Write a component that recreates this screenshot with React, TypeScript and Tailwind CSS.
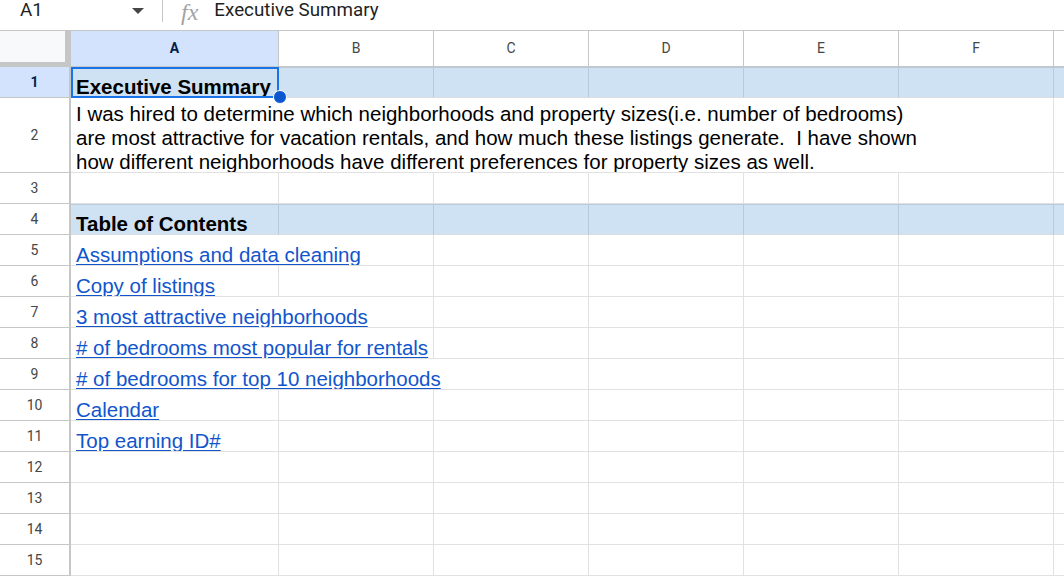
import React from "react";

type Cell = { span: number; content?: React.ReactNode };
type Row = { n: number; tall?: boolean; blue?: boolean; selected?: boolean; cell?: Cell };

const spanWidth: Record<number, string> = {
  1: "w-[208px]",
  2: "w-[363px]",
  3: "w-[518px]",
  6: "w-[983px]",
};

const cols = ["A", "B", "C", "D", "E", "F", "G"];

const Link = ({ children }: { children: React.ReactNode }) => (
  <span className="text-[#1155cc] underline underline-offset-[2px] decoration-[1.5px]">{children}</span>
);

const rows: Row[] = [
  { n: 1, blue: true, selected: true, cell: { span: 1, content: <b>Executive Summary</b> } },
  {
    n: 2,
    tall: true,
    cell: {
      span: 6,
      content: (
        <div className="whitespace-pre">
          <div>I was hired to determine which neighborhoods and property sizes(i.e. number of bedrooms)</div>
          <div>are most attractive for vacation rentals, and how much these listings generate.  I have shown</div>
          <div>how different neighborhoods have different preferences for property sizes as well.</div>
        </div>
      ),
    },
  },
  { n: 3 },
  { n: 4, blue: true, cell: { span: 1, content: <b>Table of Contents</b> } },
  { n: 5, cell: { span: 2, content: <Link>Assumptions and data cleaning</Link> } },
  { n: 6, cell: { span: 1, content: <Link>Copy of listings</Link> } },
  { n: 7, cell: { span: 2, content: <Link>3 most attractive neighborhoods</Link> } },
  { n: 8, cell: { span: 2, content: <Link># of bedrooms most popular for rentals</Link> } },
  { n: 9, cell: { span: 3, content: <Link># of bedrooms for top 10 neighborhoods</Link> } },
  { n: 10, cell: { span: 1, content: <Link>Calendar</Link> } },
  { n: 11, cell: { span: 1, content: <Link>Top earning ID#</Link> } },
  { n: 12 },
  { n: 13 },
  { n: 14 },
  { n: 15 },
];

function SheetRow({ row }: { row: Row }) {
  const first = row.cell ?? { span: 1 };
  const rest = cols.length - first.span;
  const h = row.tall ? "h-[75px]" : "h-[31px]";
  const cellBase = row.blue
    ? "bg-[#cfe2f3] border-r border-b border-r-[#b9cadb] border-b-[#dadce0] shadow-[inset_0_1px_0_#bccbd9]"
    : "border-r border-b border-[#e1e1e1]";
  return (
    <div className={`flex ${h} shrink-0`}>
      <div
        className={`w-[71px] shrink-0 flex items-center justify-center border-r-2 border-b border-[#c4c7c5] text-[14px] ${
          row.selected ? "bg-[#d3e3fd] text-[#041e49] font-bold" : "bg-white text-[#444746]"
        }`}
        style={{ fontFamily: "Roboto, sans-serif" }}
      >
        {row.n}
      </div>
      <div
        className={`${spanWidth[first.span]} shrink-0 ${cellBase} flex items-end pl-[5px] text-[20.5px] leading-[24px] text-black whitespace-nowrap overflow-hidden`}
      >
        <div className="-mb-[2px]">{first.content}</div>
      </div>
      {Array.from({ length: rest }).map((_, i) => (
        <div key={i} className={`w-[155px] shrink-0 ${cellBase}`} />
      ))}
    </div>
  );
}

export default function App() {
  return (
    <div
      className="relative w-[1064px] h-[577px] overflow-hidden bg-white"
      style={{ fontFamily: '"Liberation Sans", Arial, sans-serif' }}
    >
      {/* formula bar */}
      <div className="flex h-[30px] items-start text-[18.8px] text-[#1f1f1f]" style={{ fontFamily: "Roboto, sans-serif" }}>
        <div className="w-[162px] flex items-start leading-[20px] pl-[20px]">
          <span>A1</span>
          <svg className="ml-auto mr-[18px] mt-[8px]" width="12" height="6" viewBox="0 0 12 6">
            <polygon points="0,0 12,0 6,6" fill="#444746" />
          </svg>
        </div>
        <div className="w-px h-[22px] bg-[#c4c7c5]" />
        <span
          className="ml-[15px] px-[3px] italic text-[24px] leading-[24px] text-[#a3a3a3]"
          style={{ fontFamily: '"Liberation Serif", serif' }}
        >
          fx
        </span>
        <span className="ml-[13px] leading-[20px]">Executive Summary</span>
      </div>

      {/* column headers */}
      <div className="flex h-[37px] border-t border-[#c4c7c5]">
        <div className="w-[71px] shrink-0 bg-[#f8f9fa] border-r-[6px] border-b-[5px] border-[#c4c7c5]" />
        {cols.map((c) => (
          <div
            key={c}
            className={`${c === "A" ? "w-[208px] bg-[#d3e3fd] text-[#041e49] font-bold" : "w-[155px] bg-white text-[#444746]"} shrink-0 flex items-center justify-center border-r border-b border-[#c4c7c5] text-[14px]`}
            style={{ fontFamily: "Roboto, sans-serif" }}
          >
            {c === "G" ? "" : c}
          </div>
        ))}
      </div>

      {rows.map((r) => (
        <SheetRow key={r.n} row={r} />
      ))}

      {/* selection */}
      <div className="absolute left-[71px] top-[67px] w-[208px] h-[31px] border-2 border-[#1a73e8]" />
      <div className="absolute left-[273px] top-[90px] w-[14px] h-[14px] rounded-full bg-[#0b57d0] border border-white" />
    </div>
  );
}
